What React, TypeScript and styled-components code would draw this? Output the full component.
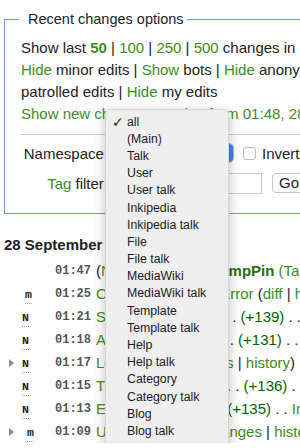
import React from 'react';
import styled, { createGlobalStyle } from 'styled-components';

const GlobalStyle = createGlobalStyle`
  html, body {
    margin: 0;
    padding: 0;
    overflow: hidden;
    background: #fff;
  }
  body {
    font-family: "Liberation Sans", Arial, sans-serif;
    color: #222;
  }
`;

const Page = styled.div`
  position: relative;
  width: 700px;
  padding: 10px 0 0 4px;
`;

const Options = styled.fieldset`
  margin: 0;
  padding: 9px 16px 15px;
  width: 580px;
  border: 1px solid #6d9cd6;
  font-size: 15px;
`;

const Legend = styled.legend`
  margin-left: -2px;
  padding: 0 3px 0 9px;
  font-size: 14.5px;
  line-height: 18px;
`;

const OptionLine = styled.div`
  line-height: 22px;
`;

const Link = styled.a<{ $bold?: boolean; $dark?: boolean }>`
  color: ${(p) => (p.$dark ? '#2c6d14' : '#3a8d1f')};
  font-weight: ${(p) => (p.$bold ? 'bold' : 'normal')};
  text-decoration: none;
`;

const Divider = styled.hr`
  margin: 9px 0 3px;
  height: 0;
  border: 0;
  border-top: 1px solid #cdcdcd;
`;

const FormGrid = styled.div`
  display: grid;
  grid-template-columns: 87px auto;
  grid-auto-rows: 30px;
  column-gap: 4px;
  align-items: center;
`;

const FieldLabel = styled.div`
  text-align: right;
`;

const Controls = styled.div`
  display: flex;
  align-items: center;
`;

const SelectBox = styled.div`
  box-sizing: border-box;
  width: 122px;
  height: 20px;
  margin-right: 9px;
  border: 1px solid #b5b5b5;
  border-radius: 5px;
  background: linear-gradient(to right, #fff 104px, #3f86ef 104px);
`;

const Checkbox = styled.span`
  box-sizing: border-box;
  width: 13px;
  height: 13px;
  margin-right: 6px;
  border: 1px solid #bcbcbc;
  border-radius: 3px;
  background: #fff;
`;

const TextInput = styled.div`
  box-sizing: border-box;
  width: 150px;
  height: 21px;
  margin-right: 10px;
  border: 1px solid #c9c9c9;
  background: #fff;
`;

const GoButton = styled.button`
  height: 20px;
  padding: 0 8px 0 6px;
  border: 1px solid #c4c4c4;
  border-radius: 4px;
  background: #fff;
  font-family: "Liberation Sans", Arial, sans-serif;
  font-size: 15px;
  line-height: 18px;
  color: #222;
`;

const DayHeading = styled.h4`
  margin: 21px 0 4px;
  font-size: 15px;
  line-height: 20px;
  font-weight: bold;
`;

const RcRow = styled.div`
  display: grid;
  grid-template-columns: 18px 33px 41px auto;
  height: 23px;
  align-items: center;
  white-space: nowrap;
  font-size: 15px;
`;

const Arrow = styled.span`
  width: 0;
  height: 0;
  margin-left: 5px;
  border-left: 5px solid #8a8a8a;
  border-top: 4.5px solid transparent;
  border-bottom: 4.5px solid transparent;
`;

const FlagCell = styled.span``;

const Flag = styled.abbr<{ $offset: number }>`
  display: inline-block;
  margin-left: ${(p) => p.$offset}px;
  padding-bottom: 2px;
  border-bottom: 1px dotted #9a9a9a;
  font-family: "Liberation Mono", "DejaVu Sans Mono", monospace;
  font-size: 11.5px;
  font-weight: bold;
  line-height: 12px;
  text-decoration: none;
  color: #222;
`;

const Time = styled.span`
  font-family: "Liberation Mono", "DejaVu Sans Mono", monospace;
  font-size: 12px;
  font-weight: bold;
  color: #555;
`;

const Delta = styled.span`
  color: #006400;
`;

const Dropdown = styled.ul`
  position: absolute;
  left: 105px;
  top: 109px;
  box-sizing: border-box;
  width: 124px;
  height: 360px;
  margin: 0;
  padding: 3px 0 0;
  list-style: none;
  background: #efefef;
  border: 1px solid rgba(0, 0, 0, 0.1);
  border-radius: 5px;
  box-shadow: 0 3px 12px rgba(0, 0, 0, 0.26);
  font-family: "Liberation Sans", Arial, sans-serif;
  font-size: 12.3px;
  color: #1c1c1c;
  overflow: hidden;
`;

const Choice = styled.li`
  display: grid;
  grid-template-columns: 21px auto;
  height: 17.2px;
  align-items: center;
`;

const Check = styled.span`
  padding-left: 6px;
  font-family: "DejaVu Sans", sans-serif;
  font-size: 14px;
  line-height: 14px;
`;

const namespaces = [
  'all', '(Main)', 'Talk', 'User', 'User talk', 'Inkipedia', 'Inkipedia talk',
  'File', 'File talk', 'MediaWiki', 'MediaWiki talk', 'Template', 'Template talk',
  'Help', 'Help talk', 'Category', 'Category talk', 'Blog', 'Blog talk', 'Comment',
];

type Change = {
  time: string;
  flag?: 'N' | 'm';
  grouped?: boolean;
  content: React.ReactNode;
};

const newPage = (title: string, delta: string) => (
  <>
    <Link>{title}</Link> (diff | <Link>hist</Link>) . . <Delta>({delta})</Delta> . . <Link>Inkling</Link> (<Link>Talk</Link> | <Link>contribs</Link>)
  </>
);

const changes: Change[] = [
  {
    time: '01:47',
    content: (
      <>
        (<Link>New user log</Link>) . . <Link $bold $dark>SimpPin</Link> <Link>(Talk</Link> | <Link>contribs</Link>) created a new user account
      </>
    ),
  },
  {
    time: '01:25',
    flag: 'm',
    content: (
      <>
        <Link>Category:Network Error</Link> (<Link>diff</Link> | <Link>hist</Link>) . . <Delta>(+12)</Delta> . . <Link>Octarian</Link>
      </>
    ),
  },
  { time: '01:21', flag: 'N', content: newPage('Sploosh', '+139') },
  { time: '01:18', flag: 'N', content: newPage('Agent 4', '+131') },
  {
    time: '01:17',
    flag: 'N',
    grouped: true,
    content: (
      <>
        <Link>Level Up</Link> (2 <Link>changes</Link> | <Link>history</Link>) . . <Delta>(+204)</Delta> . . [Inkling×2]
      </>
    ),
  },
  { time: '01:15', flag: 'N', content: newPage('Turf War', '+136') },
  { time: '01:13', flag: 'N', content: newPage('Eeltail', '+135') },
  {
    time: '01:09',
    flag: 'm',
    grouped: true,
    content: (
      <>
        <Link>Ultra Stamp</Link> (13 <Link>changes</Link> | <Link>history</Link>) . . <Delta>(+48)</Delta> . . [Octarian×13]
      </>
    ),
  },
];

const App: React.FC = () => {
  return (
    <Page>
      <GlobalStyle />
      <Options>
        <Legend>Recent changes options</Legend>
        <OptionLine>
          Show last <Link $bold>50</Link> | <Link>100</Link> | <Link>250</Link> | <Link>500</Link> changes in last{' '}
          <Link>1</Link> | <Link>3</Link> | <Link $bold>7</Link> | <Link>14</Link> | <Link>30</Link> days
        </OptionLine>
        <OptionLine>
          <Link>Hide</Link> minor edits | <Link>Show</Link> bots | <Link>Hide</Link> anonymous users |{' '}
          <Link>Hide</Link> logged-in users | <Link>Hide</Link> patrolled edits | <Link>Hide</Link> my edits
        </OptionLine>
        <OptionLine>
          <Link>Show new changes starting from 01:48, 28 September 2023</Link>
        </OptionLine>
        <Divider />
        <FormGrid>
          <FieldLabel>Namespace:</FieldLabel>
          <Controls>
            <SelectBox />
            <Checkbox />
            Invert selection
          </Controls>
          <FieldLabel>
            <Link>Tag</Link> filter:
          </FieldLabel>
          <Controls>
            <TextInput />
            <GoButton>Go</GoButton>
          </Controls>
        </FormGrid>
      </Options>

      <DayHeading>28 September 2023</DayHeading>
      {changes.map((c) => (
        <RcRow key={c.time}>
          {c.grouped ? <Arrow /> : <span />}
          <FlagCell>{c.flag && <Flag $offset={c.flag === 'm' ? (c.grouped ? 5 : 3) : 0}>{c.flag}</Flag>}</FlagCell>
          <Time>{c.time}</Time>
          <span>{c.content}</span>
        </RcRow>
      ))}

      <Dropdown>
        {namespaces.map((ns, i) => (
          <Choice key={ns}>
            <Check>{i === 0 ? '✓' : ''}</Check>
            {ns}
          </Choice>
        ))}
      </Dropdown>
    </Page>
  );
};

export default App;
